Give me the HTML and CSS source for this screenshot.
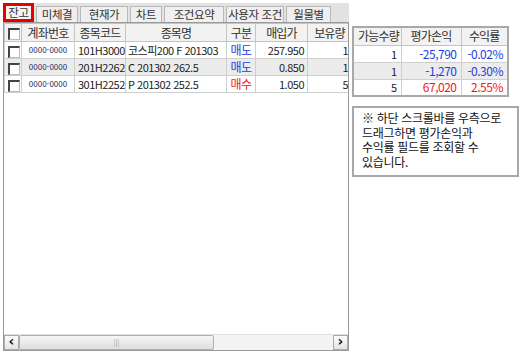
FILE: index.html
```html
<!DOCTYPE html>
<html lang="ko">
<head>
    <meta charset="UTF-8">
    <title>잔고</title>
    <link rel="stylesheet" href="styles.css">
</head>
<body>
    <div class="screen">
        <div class="panel">
            <div class="tabs">
                <div class="tab active">잔고</div>
                <div class="tab">미체결</div>
                <div class="tab">현재가</div>
                <div class="tab">차트</div>
                <div class="tab">조건요약</div>
                <div class="tab">사용자 조건</div>
                <div class="tab">월물별</div>
            </div>
            <div class="grid">
                <table class="table main">
                    <colgroup>
                        <col class="c-chk"><col class="c-acct"><col class="c-code">
                        <col class="c-name"><col class="c-side"><col class="c-price"><col class="c-qty">
                    </colgroup>
                    <tr class="head">
                        <th><span class="chk"></span></th>
                        <th>계좌번호</th>
                        <th>종목코드</th>
                        <th>종목명</th>
                        <th>구분</th>
                        <th>매입가</th>
                        <th>보유량</th>
                    </tr>
                    <tr>
                        <td><span class="chk"></span></td>
                        <td class="acct">0000-0000</td>
                        <td>101H3000</td>
                        <td class="left">코스피200 F 201303</td>
                        <td class="blue">매도</td>
                        <td class="num">257.950</td>
                        <td class="num">1</td>
                    </tr>
                    <tr class="alt">
                        <td><span class="chk"></span></td>
                        <td class="acct">0000-0000</td>
                        <td>201H2262</td>
                        <td class="left">C 201302 262.5</td>
                        <td class="blue">매도</td>
                        <td class="num">0.850</td>
                        <td class="num">1</td>
                    </tr>
                    <tr>
                        <td><span class="chk"></span></td>
                        <td class="acct">0000-0000</td>
                        <td>301H2252</td>
                        <td class="left">P 201302 252.5</td>
                        <td class="red">매수</td>
                        <td class="num">1.050</td>
                        <td class="num">5</td>
                    </tr>
                </table>
                <div class="spacer"></div>
                <div class="hscroll">
                    <div class="arrow">&#8249;</div>
                    <div class="thumb"><span class="grip">|||</span></div>
                    <div class="track"></div>
                    <div class="arrow">&#8250;</div>
                </div>
            </div>
        </div>

        <div class="side">
            <table class="table extra">
                <colgroup>
                    <col class="c-avail"><col class="c-pl"><col class="c-rate">
                </colgroup>
                <tr class="head">
                    <th>가능수량</th>
                    <th>평가손익</th>
                    <th>수익률</th>
                </tr>
                <tr>
                    <td class="num">1</td>
                    <td class="num blue">-25,790</td>
                    <td class="num blue">-0.02%</td>
                </tr>
                <tr class="alt">
                    <td class="num">1</td>
                    <td class="num blue">-1,270</td>
                    <td class="num blue">-0.30%</td>
                </tr>
                <tr>
                    <td class="num">5</td>
                    <td class="num red">67,020</td>
                    <td class="num red">2.55%</td>
                </tr>
            </table>
            <div class="note">
                <p>※ 하단 스크롤바를 우측으로</p>
                <p>드래그하면 평가손익과</p>
                <p>수익률 필드를 조회할 수</p>
                <p>있습니다.</p>
            </div>
        </div>
    </div>
</body>
</html>
```

FILE: styles.css
```css
body {
    margin: 0;
    background: #fff;
    font-family: "Noto Sans CJK KR", "Noto Sans", sans-serif;
    font-size: 12px;
    color: #222;
}

.screen {
    display: flex;
    align-items: flex-start;
    gap: 3px;
    padding: 3px 0 0 3px;
}

.panel {
    width: 346px;
    height: 348px;
    display: flex;
    flex-direction: column;
    background: #e2e2e2;
}

/* Tabs */
.tabs {
    display: flex;
    align-items: flex-end;
    gap: 2px;
    height: 19px;
}

.tab {
    height: 16px;
    line-height: 15px;
    background: #efefef;
    border: 1px solid #b8b8b8;
    border-bottom: none;
    box-sizing: border-box;
    color: #333;
    text-align: center;
    white-space: nowrap;
    font-size: 11.5px;
    letter-spacing: -0.4px;
}

.tab:nth-child(2) { width: 42px; }
.tab:nth-child(3) { width: 48px; }
.tab:nth-child(4) { width: 32px; }
.tab:nth-child(5) { width: 60px; }
.tab:nth-child(6) { width: 58px; }
.tab:nth-child(7) { width: 45px; }

.tab.active {
    width: 31px;
    height: 19px;
    line-height: 13px;
    border: 3px solid #e60000;
    background: #f4f4f4;
}

/* Grid */
.grid {
    flex: 1;
    display: flex;
    flex-direction: column;
    background: #fff;
    border: 1px solid #9a9a9a;
    overflow: hidden;
}

.spacer {
    flex: 1;
}

.table {
    border-collapse: collapse;
    table-layout: fixed;
    font-size: 11px;
    letter-spacing: -0.5px;
}

.main {
    width: 347px;
}

.c-chk { width: 17px; }
.c-acct { width: 53px; }
.c-code { width: 51px; }
.c-name { width: 101px; }
.c-side { width: 29px; }
.c-price { width: 52px; }
.c-qty { width: 44px; }

.table tr {
    height: 17px;
}

.table th,
.table td {
    padding: 0 3px;
    border: 1px solid #cfcfcf;
    white-space: nowrap;
    overflow: hidden;
    font-weight: normal;
    text-align: center;
    line-height: 14px;
}

.table tr.head {
    height: 18px;
}

.table th {
    background: #f2f2f2;
    border-color: #c4c4c4;
    color: #333;
    font-size: 12px;
    letter-spacing: -0.8px;
}

.table tr.alt td {
    background: #ececec;
}

.table td.left {
    text-align: left;
    padding-left: 2px;
}

.table td.num {
    text-align: right;
}

.table td.acct {
    font-size: 8px;
    letter-spacing: 0;
    color: #1b2a6b;
}

.table td.blue {
    color: #1c3fe0;
    font-size: 12px;
}

.table td.red {
    color: #f01818;
    font-size: 12px;
}

.chk {
    display: inline-block;
    width: 9px;
    height: 9px;
    vertical-align: middle;
    background: #fff;
    border-top: 2px solid #444;
    border-left: 2px solid #444;
    border-right: 1px solid #bbb;
    border-bottom: 1px solid #bbb;
}

/* Horizontal scrollbar */
.hscroll {
    display: flex;
    height: 15px;
    background: #f4f4f4;
    border-top: 1px solid #e0e0e0;
}

.arrow {
    width: 15px;
    height: 15px;
    box-sizing: border-box;
    border: 1px solid #a9a9a9;
    background: linear-gradient(#fdfdfd, #e4e4e4);
    font-family: "DejaVu Sans", sans-serif;
    font-weight: bold;
    font-size: 14px;
    line-height: 11px;
    text-align: center;
    color: #111;
}

.thumb {
    width: 195px;
    box-sizing: border-box;
    border: 1px solid #b0b0b0;
    border-radius: 2px;
    background: linear-gradient(#f7f7f7, #dedede);
    text-align: center;
    font-size: 7px;
    line-height: 13px;
    color: #999;
}

.track {
    flex: 1;
}

/* Right side */
.side {
    display: flex;
    flex-direction: column;
    gap: 9px;
    padding-top: 23px;
}

.extra {
    width: 157px;
    border: 2px solid #a8a8a8;
}

.c-avail { width: 48px; }
.c-pl { width: 60px; }
.c-rate { width: 47px; }

.extra th,
.extra td {
    padding: 0 4px;
}

.note {
    width: 151px;
    border: 2px solid #a8a8a8;
    padding: 3px 4px 6px 8px;
    color: #111;
    letter-spacing: -0.3px;
}

.note p {
    margin: 0;
    height: 14.5px;
    line-height: 14px;
}
```
